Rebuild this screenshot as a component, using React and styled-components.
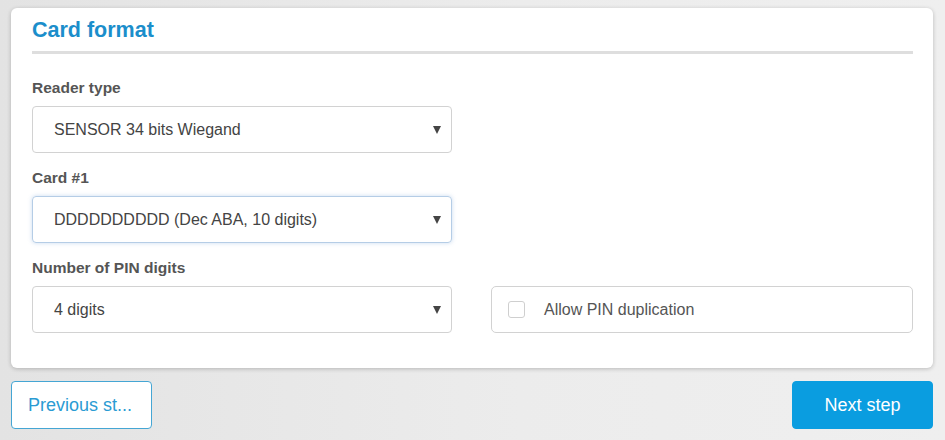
import React from 'react';
import styled, { createGlobalStyle } from 'styled-components';

const GlobalStyle = createGlobalStyle`
  html, body {
    margin: 0;
    padding: 0;
    height: 100%;
  }
  body {
    font-family: "Liberation Sans", Arial, sans-serif;
    background: linear-gradient(90deg, #e3e3e3 0%, #ececec 55%, #efefef 100%);
  }
`;

const Page = styled.div`
  width: 945px;
  height: 440px;
  box-sizing: border-box;
  padding: 8px 12px 0 11px;
`;

const Card = styled.section`
  background: #fff;
  border-radius: 6px;
  box-shadow: 0 1px 4px rgba(0, 0, 0, 0.22);
  padding: 9px 20px 35px 21px;
`;

const Title = styled.h2`
  margin: 0;
  font-size: 21.5px;
  line-height: 26px;
  font-weight: bold;
  color: #1b8ecb;
  padding-bottom: 8px;
  border-bottom: 3px solid #dedede;
`;

const Fields = styled.div`
  display: grid;
  grid-template-columns: 420px 1fr;
  column-gap: 39px;
  padding-top: 24px;
  row-gap: 15px;
`;

const Field = styled.div`
  grid-column: 1;
  display: flex;
  flex-direction: column;
  gap: 8px;
`;

const Label = styled.label`
  font-size: 15.5px;
  line-height: 20px;
  font-weight: bold;
  color: #555;
`;

const Select = styled.div`
  height: 47px;
  box-sizing: border-box;
  display: flex;
  align-items: center;
  justify-content: space-between;
  padding: 0 9px 0 21px;
  border: 1px solid ${p => (p.$focused ? '#b5cde6' : '#d2d2d2')};
  border-radius: 4px;
  box-shadow: ${p => (p.$focused ? '0 0 4px rgba(100, 150, 210, 0.35)' : 'none')};
  font-size: 16px;
  color: #444;
`;

const Caret = styled.span`
  width: 0;
  height: 0;
  border-left: 4px solid transparent;
  border-right: 4px solid transparent;
  border-top: 8px solid #444;
  margin-right: 1px;
`;

const CheckField = styled.div`
  grid-column: 2;
  grid-row: 3;
  align-self: end;
  height: 47px;
  box-sizing: border-box;
  display: flex;
  align-items: center;
  gap: 19px;
  padding-left: 16px;
  border: 1px solid #d2d2d2;
  border-radius: 5px;
  font-size: 16px;
  color: #555;
`;

const Box = styled.span`
  width: 15px;
  height: 15px;
  border: 1px solid #cfcfcf;
  border-radius: 3px;
  background: #fff;
`;

const Actions = styled.div`
  display: flex;
  justify-content: space-between;
  padding-top: 13px;
`;

const Button = styled.button`
  width: 141px;
  height: 48px;
  box-sizing: border-box;
  padding: 0 16px;
  border-radius: 4px;
  font-family: "Liberation Sans", Arial, sans-serif;
  font-size: 18px;
  text-align: ${p => (p.$primary ? 'center' : 'left')};
  white-space: nowrap;
  cursor: pointer;
  border: 1px solid ${p => (p.$primary ? '#0a9de0' : '#45a6d4')};
  background: ${p => (p.$primary ? '#0a9de0' : '#fff')};
  color: ${p => (p.$primary ? '#fff' : '#2a9bd3')};
`;

const fields = [
  { label: 'Reader type', value: 'SENSOR 34 bits Wiegand' },
  { label: 'Card #1', value: 'DDDDDDDDDD (Dec ABA, 10 digits)', focused: true },
  { label: 'Number of PIN digits', value: '4 digits' },
];

export default function App() {
  return (
    <Page>
      <GlobalStyle />
      <Card>
        <Title>Card format</Title>
        <Fields>
          {fields.map(f => (
            <Field key={f.label}>
              <Label>{f.label}</Label>
              <Select $focused={f.focused}>
                <span>{f.value}</span>
                <Caret />
              </Select>
            </Field>
          ))}
          <CheckField>
            <Box />
            <span>Allow PIN duplication</span>
          </CheckField>
        </Fields>
      </Card>
      <Actions>
        <Button title="Previous step">Previous st...</Button>
        <Button $primary>Next step</Button>
      </Actions>
    </Page>
  );
}
